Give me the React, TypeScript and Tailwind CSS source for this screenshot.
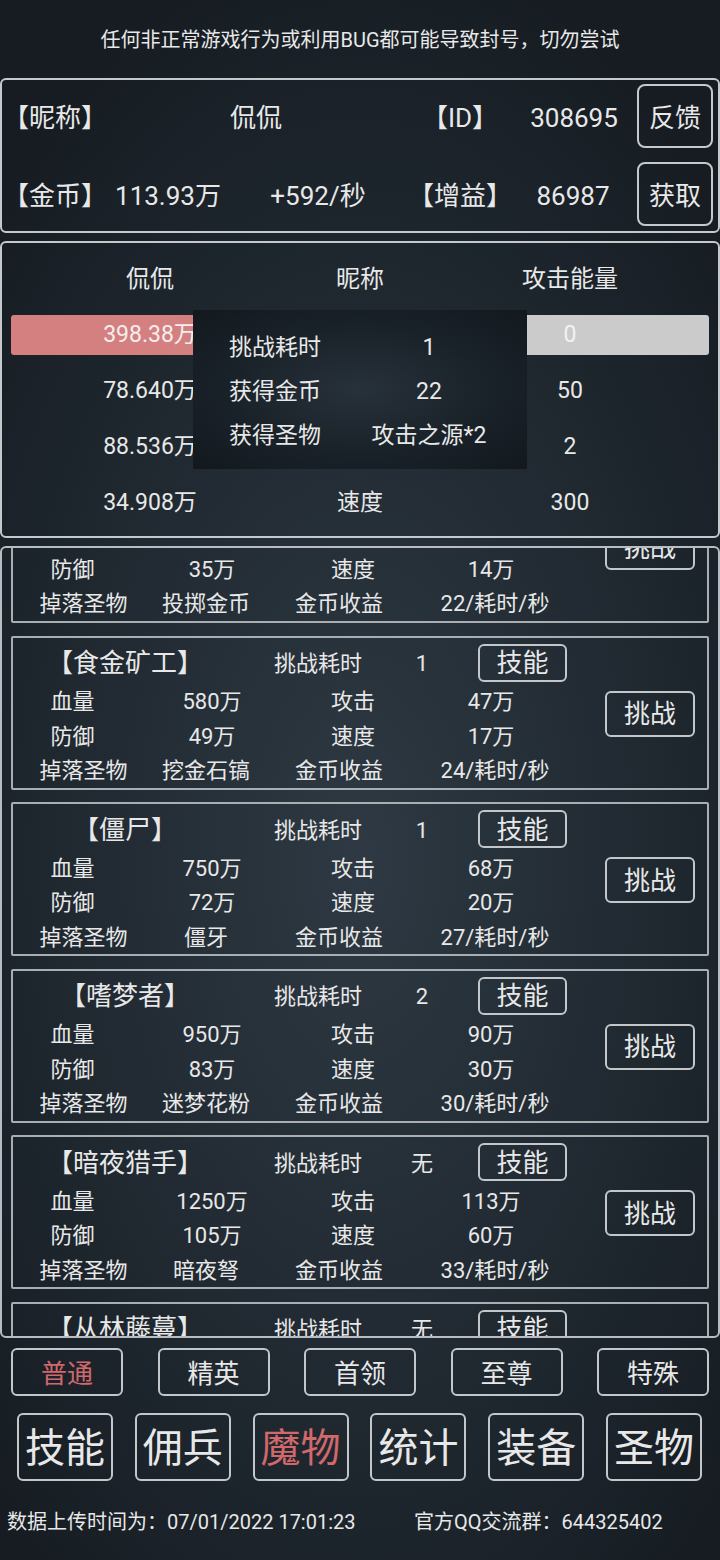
import React from "react";

type Card = {
  name: string;
  time: string;
  hp: string;
  atk: string;
  def: string;
  spd: string;
  drop: string;
  gold: string;
  hideTop?: boolean;
  hideBottom?: boolean;
};

const cards: Card[] = [
  { name: "【哥布林】", time: "1", hp: "380万", atk: "33万", def: "35万", spd: "14万", drop: "投掷金币", gold: "22/耗时/秒", hideTop: true },
  { name: "【食金矿工】", time: "1", hp: "580万", atk: "47万", def: "49万", spd: "17万", drop: "挖金石镐", gold: "24/耗时/秒" },
  { name: "【僵尸】", time: "1", hp: "750万", atk: "68万", def: "72万", spd: "20万", drop: "僵牙", gold: "27/耗时/秒" },
  { name: "【嗜梦者】", time: "2", hp: "950万", atk: "90万", def: "83万", spd: "30万", drop: "迷梦花粉", gold: "30/耗时/秒" },
  { name: "【暗夜猎手】", time: "无", hp: "1250万", atk: "113万", def: "105万", spd: "60万", drop: "暗夜弩", gold: "33/耗时/秒" },
  { name: "【从林藤蔓】", time: "无", hp: "1600万", atk: "140万", def: "130万", spd: "80万", drop: "藤蔓", gold: "36/耗时/秒", hideBottom: true },
];

function MonsterCard({ c }: { c: Card }) {
  return (
    <div className="h-[154px] shrink-0 border-2 border-[#a9aeb3] rounded-[2px] flex">
      <div className="w-[580px] flex flex-col pt-[6px]">
        {c.hideTop ? (
          <div className="h-[38px]" />
        ) : (
          <div className="h-[38px] flex items-center">
            <span className="w-[224px] text-center text-[26px] whitespace-nowrap pt-[2px]">{c.name}</span>
            <span className="w-[162px] text-center text-[22px] pt-[2px]">挑战耗时</span>
            <span className="w-[46px] text-center text-[22px] pt-[2px]">{c.time}</span>
            <div className="ml-[33px] w-[89px] h-[38px] border-2 border-[#c3c7ca] rounded-[6px] flex items-center justify-center text-[26px] pt-[2px]">
              技能
            </div>
          </div>
        )}
        {c.hideBottom ? null : (
          <>
            {c.hideTop ? (
              <div className="mt-[3px] h-[35px]" />
            ) : (
              <div className="mt-[3px] h-[35px] flex items-center text-[22px]">
                <span className="w-[119px] text-center">血量</span>
                <span className="w-[160px] text-center">{c.hp}</span>
                <span className="w-[122px] text-center">攻击</span>
                <span className="w-[154px] text-center">{c.atk}</span>
              </div>
            )}
            <div className="h-[35px] flex items-center text-[22px]">
              <span className="w-[119px] text-center">防御</span>
              <span className="w-[160px] text-center">{c.def}</span>
              <span className="w-[122px] text-center">速度</span>
              <span className="w-[154px] text-center">{c.spd}</span>
            </div>
            <div className="h-[35px] flex items-center text-[22px] whitespace-nowrap">
              <span className="w-[141px] text-center">掉落圣物</span>
              <span className="w-[104px] text-center">{c.drop}</span>
              <span className="w-[162px] text-center">金币收益</span>
              <span className="w-[150px] text-center">{c.gold}</span>
            </div>
          </>
        )}
      </div>
      <div className="flex-1 flex items-center justify-end pr-[12px] pt-[2px]">
        {c.hideBottom ? null : (
          <div className="w-[90px] h-[46px] border-2 border-[#c3c7ca] rounded-[6px] flex items-center justify-center text-[26px] pt-[2px]">
            挑战
          </div>
        )}
      </div>
    </div>
  );
}

export default function App() {
  const tabs = ["普通", "精英", "首领", "至尊", "特殊"];
  const nav = ["技能", "佣兵", "魔物", "统计", "装备", "圣物"];
  return (
    <div className="w-[720px] h-[1560px] overflow-hidden flex flex-col text-[#e8e8e8] font-['Roboto','Noto_Sans_CJK_SC',sans-serif] bg-[radial-gradient(ellipse_70%_60%_at_50%_55%,#2e3943_0%,#222b33_50%,#161c22_100%)]">
      <div className="h-[78px] shrink-0 flex items-center justify-center text-[20px] pt-[2px]">
        任何非正常游戏行为或利用BUG都可能导致封号，切勿尝试
      </div>

      {/* account panel */}
      <div className="h-[155px] shrink-0 border-2 border-[#c6c9cc] rounded-[6px] py-[4px] flex flex-col gap-[14px] text-[26px] whitespace-nowrap">
        <div className="h-[64px] flex items-center pl-[1px]">
          <span className="w-[104px] pt-[4px]">【昵称】</span>
          <span className="w-[298px] text-center pt-[4px]">侃侃</span>
          <span className="w-[110px] text-center pt-[4px]">【ID】</span>
          <span className="w-[118px] text-center pt-[4px]">308695</span>
          <div className="ml-auto mr-[5px] w-[76px] h-[64px] border-2 border-[#c6c9cc] rounded-[8px] flex items-center justify-center pt-[4px]">
            反馈
          </div>
        </div>
        <div className="h-[64px] flex items-center pl-[1px]">
          <span className="w-[104px] pt-[4px]">【金币】</span>
          <span className="w-[122px] text-center pt-[4px]">113.93万</span>
          <span className="w-[178px] text-center pt-[4px]">+592/秒</span>
          <span className="w-[106px] text-center pt-[4px]">【增益】</span>
          <span className="w-[120px] text-center pt-[4px]">86987</span>
          <div className="ml-auto mr-[5px] w-[76px] h-[64px] border-2 border-[#c6c9cc] rounded-[8px] flex items-center justify-center pt-[4px]">
            获取
          </div>
        </div>
      </div>

      {/* battle panel */}
      <div className="mt-[8px] h-[297px] shrink-0 border-2 border-[#c6c9cc] rounded-[6px] pt-[8px] px-[9px] relative text-[23px]">
        <div className="h-[56px] flex items-center text-[24px]">
          <span className="w-[278px] text-center">侃侃</span>
          <span className="w-[142px] text-center">昵称</span>
          <span className="w-[278px] text-center">攻击能量</span>
        </div>
        <div className="h-[56px] flex items-center">
          <div className="w-[278px] h-[40px] rounded-[3px] bg-[#d48080] flex items-center justify-center text-[#f4eeee]">
            398.38万
          </div>
          <span className="w-[142px]" />
          <div className="w-[278px] h-[40px] rounded-[3px] bg-[#cbcbcb] flex items-center justify-center text-[#f2f2f2]">
            0
          </div>
        </div>
        <div className="h-[56px] flex items-center">
          <span className="w-[278px] text-center">78.640万</span>
          <span className="w-[142px]" />
          <span className="w-[278px] text-center">50</span>
        </div>
        <div className="h-[56px] flex items-center">
          <span className="w-[278px] text-center">88.536万</span>
          <span className="w-[142px]" />
          <span className="w-[278px] text-center">2</span>
        </div>
        <div className="h-[56px] flex items-center">
          <span className="w-[278px] text-center">34.908万</span>
          <span className="w-[142px] text-center">速度</span>
          <span className="w-[278px] text-center">300</span>
        </div>

        <div className="absolute left-[191px] top-[67px] w-[334px] h-[159px] bg-[radial-gradient(ellipse_at_center,#27313a_0%,#1a2229_55%,#12181e_100%)] pt-[16px] pl-[20px] text-[23px]">
          <div className="h-[44px] flex items-center">
            <span className="w-[124px] text-center">挑战耗时</span>
            <span className="w-[184px] text-center">1</span>
          </div>
          <div className="h-[44px] flex items-center">
            <span className="w-[124px] text-center">获得金币</span>
            <span className="w-[184px] text-center">22</span>
          </div>
          <div className="h-[44px] flex items-center">
            <span className="w-[124px] text-center">获得圣物</span>
            <span className="w-[184px] text-center">攻击之源*2</span>
          </div>
        </div>
      </div>

      {/* monster list */}
      <div className="mt-[8px] h-[792px] shrink-0 border-2 border-[#b9bdc1] rounded-[6px] overflow-hidden px-[9px]">
        <div className="mt-[-79px] flex flex-col gap-[12.6px]">
          {cards.map((c) => (
            <MonsterCard key={c.name} c={c} />
          ))}
        </div>
      </div>

      {/* tabs */}
      <div className="mt-[10px] h-[48px] shrink-0 flex justify-between px-[11px]">
        {tabs.map((t, i) => (
          <div
            key={t}
            className={
              "w-[112px] h-[48px] border-2 border-[#c3c7ca] rounded-[6px] flex items-center justify-center text-[26px] pt-[4px] " +
              (i === 0 ? "text-[#d0686c]" : "")
            }
          >
            {t}
          </div>
        ))}
      </div>

      {/* nav */}
      <div className="mt-[17px] h-[68px] shrink-0 flex justify-between pl-[17px] pr-[18px]">
        {nav.map((t, i) => (
          <div
            key={t}
            className={
              "w-[96px] h-[68px] border-2 border-[#c3c7ca] rounded-[6px] flex items-center justify-center text-[40px] pt-[4px] " +
              (i === 2 ? "text-[#d0686c]" : "")
            }
          >
            {t}
          </div>
        ))}
      </div>

      {/* footer */}
      <div className="mt-[28px] h-[24px] shrink-0 flex items-center pl-[7px] text-[20px] whitespace-nowrap">
        <span className="w-[407px] pt-[2px]">数据上传时间为：07/01/2022 17:01:23</span>
        <span className="pt-[2px]">官方QQ交流群：644325402</span>
      </div>
    </div>
  );
}
